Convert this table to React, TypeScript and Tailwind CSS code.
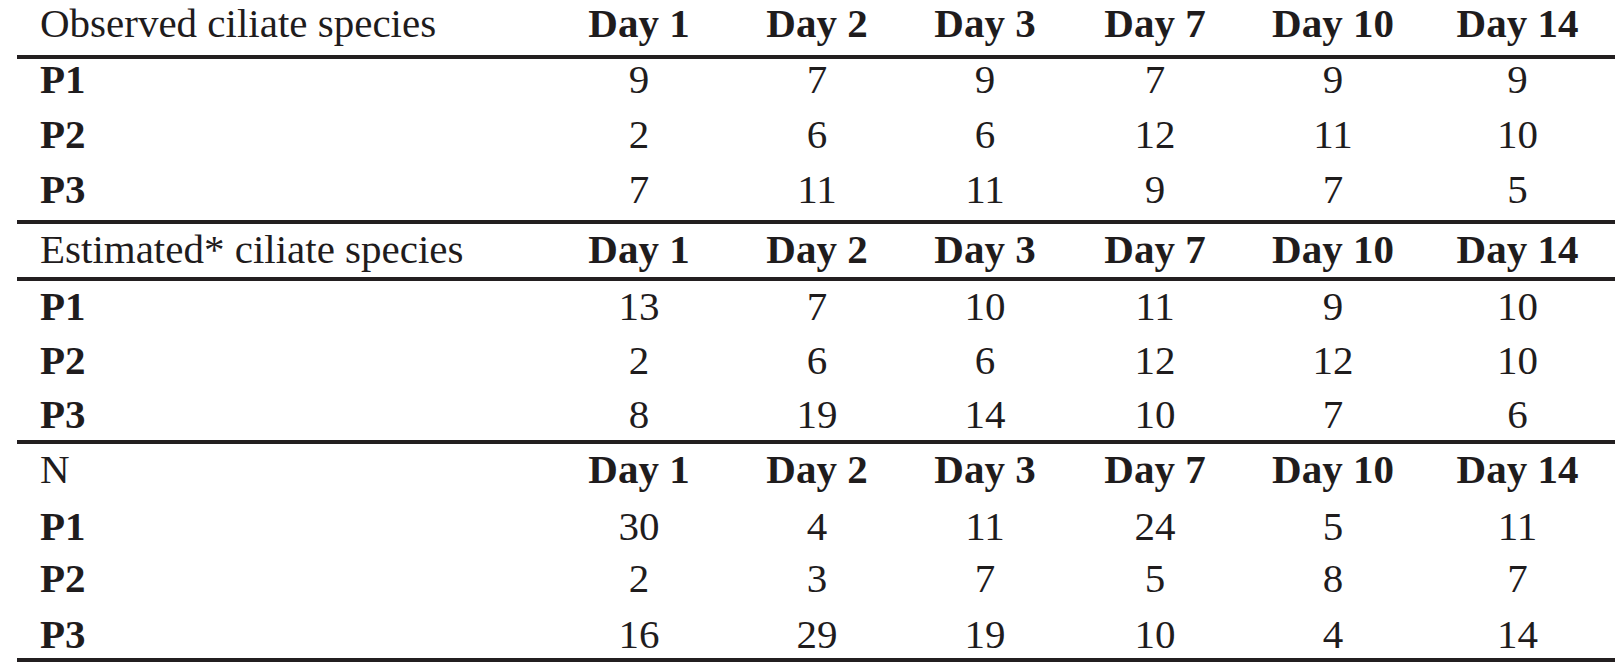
import React from 'react';

// Column template shared by every row: label column + six day columns
const cols = 'grid grid-cols-[533px_178px_178px_158px_182px_174px_195px]';
const days = ['Day 1', 'Day 2', 'Day 3', 'Day 7', 'Day 10', 'Day 14'];

interface Section {
  title: string;
  headerClass: string;
  bodyClass: string;
  rows: { label: string; values: number[]; h: string }[];
}

const sections: Section[] = [
  {
    title: 'Observed ciliate species',
    headerClass: 'h-[59px] leading-[46px] border-b-4 border-[#231f20]',
    bodyClass: '',
    rows: [
      { label: 'P1', values: [9, 7, 9, 7, 9, 9], h: 'h-[55px]' },
      { label: 'P2', values: [2, 6, 6, 12, 11, 10], h: 'h-[55px]' },
      { label: 'P3', values: [7, 11, 11, 9, 7, 5], h: 'h-[51px]' }
    ]
  },
  {
    title: 'Estimated* ciliate species',
    headerClass: 'h-[57px] leading-[50px] border-b-4 border-[#231f20]',
    bodyClass: 'pt-[5px]',
    rows: [
      { label: 'P1', values: [13, 7, 10, 11, 9, 10], h: 'h-[54px]' },
      { label: 'P2', values: [2, 6, 6, 12, 12, 10], h: 'h-[54px]' },
      { label: 'P3', values: [8, 19, 14, 10, 7, 6], h: 'h-[46px]' }
    ]
  },
  {
    title: 'N',
    headerClass: 'h-[62px] leading-[51px]',
    bodyClass: '',
    rows: [
      { label: 'P1', values: [30, 4, 11, 24, 5, 11], h: 'h-[52px]' },
      { label: 'P2', values: [2, 3, 7, 5, 8, 7], h: 'h-[56px]' },
      { label: 'P3', values: [16, 29, 19, 10, 4, 14], h: 'h-[44px]' }
    ]
  }
];

const App: React.FC = () => {
  return (
    <div className="w-[1617px] h-[663px] bg-white overflow-hidden text-[#1f1c1d] text-[41px] font-['Liberation_Serif',serif]">
      <div className="ml-[17px] w-[1598px]">
        {sections.map((section) => (
          <div key={section.title} className="border-b-4 border-[#231f20]">
            <div className={`${cols} ${section.headerClass}`}>
              <div className="pl-[23px] whitespace-nowrap">{section.title}</div>
              {days.map((day) => (
                <div key={day} className="text-center font-bold whitespace-nowrap">
                  {day}
                </div>
              ))}
            </div>
            <div className={section.bodyClass}>
              {section.rows.map((row) => (
                <div key={row.label} className={`${cols} ${row.h} leading-[40px]`}>
                  <div className="pl-[23px] font-bold">{row.label}</div>
                  {row.values.map((v, i) => (
                    <div key={i} className="text-center">
                      {v}
                    </div>
                  ))}
                </div>
              ))}
            </div>
          </div>
        ))}
      </div>
    </div>
  );
};

export default App;
